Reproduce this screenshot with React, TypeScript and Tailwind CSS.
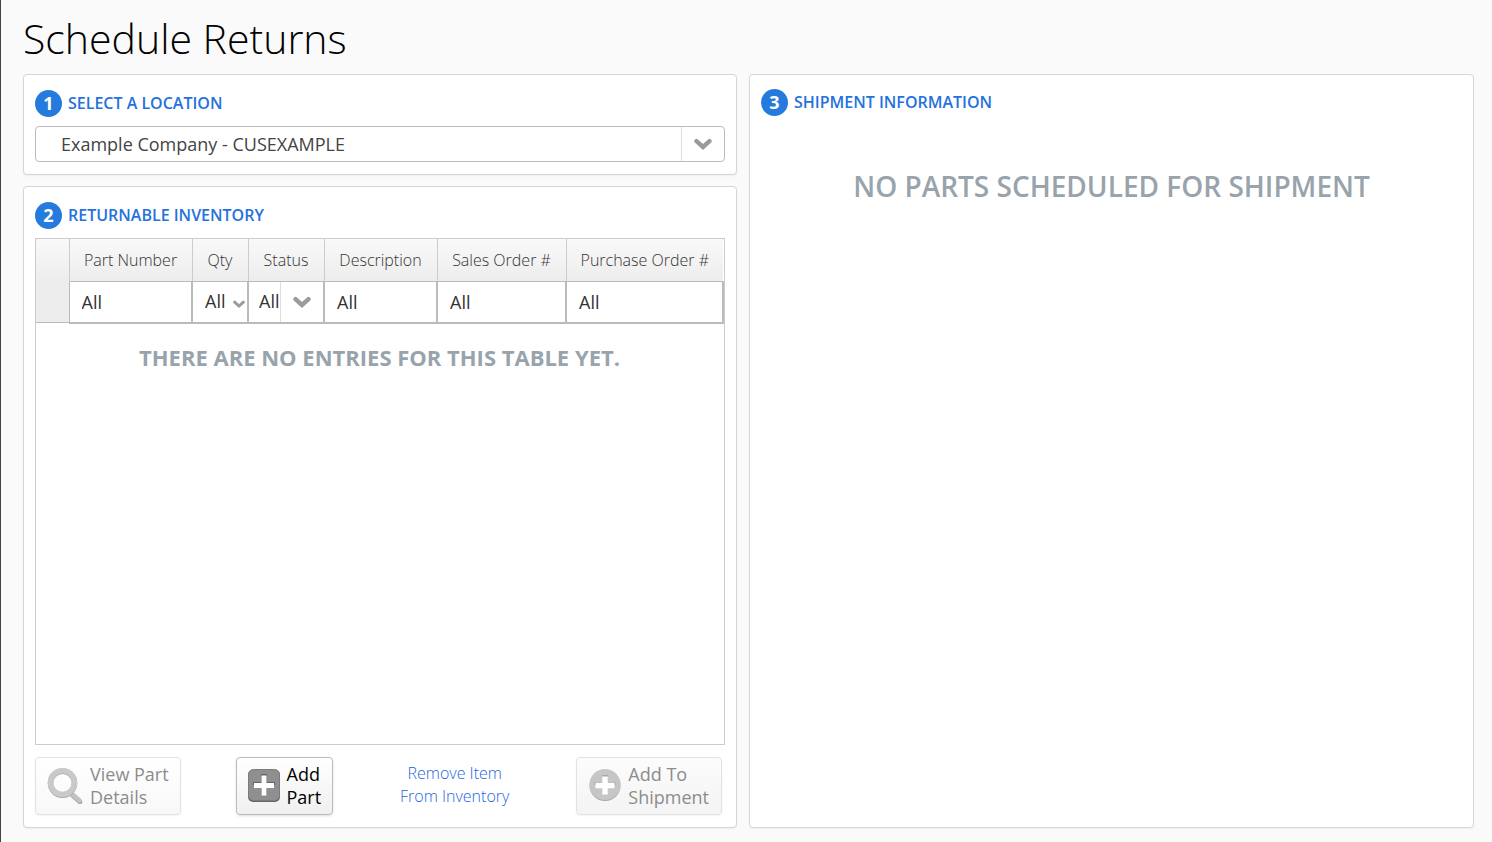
import React from 'react'
import clsx from 'clsx'

type Column = {
  id: string
  label: string
  width: string
  control: 'text' | 'compact-select' | 'select'
}

const columns: Column[] = [
  { id: 'part-number', label: 'Part Number', width: 'w-[123px]', control: 'text' },
  { id: 'qty', label: 'Qty', width: 'w-[56px]', control: 'compact-select' },
  { id: 'status', label: 'Status', width: 'w-[76px]', control: 'select' },
  { id: 'description', label: 'Description', width: 'w-[113px]', control: 'text' },
  { id: 'sales-order', label: 'Sales Order #', width: 'w-[129px]', control: 'text' },
  { id: 'purchase-order', label: 'Purchase Order #', width: 'w-[157px]', control: 'text' },
]

function Chevron({ className }: { className?: string }) {
  return (
    <svg viewBox="0 0 18 12" className={className} fill="none" aria-hidden="true">
      <path d="M2.5 3.2 9 9l6.5-5.8" stroke="#999b9d" strokeWidth="4.4" strokeLinecap="round" />
    </svg>
  )
}

function MagnifierIcon() {
  return (
    <svg viewBox="0 0 36 36" className="size-9 shrink-0" fill="none" aria-hidden="true">
      <path d="m25.5 27.5 7.5 6.5" stroke="#a5a5a5" strokeWidth="4.5" strokeLinecap="round" />
      <path d="m25 26 7.5 6.5" stroke="#c2c2c2" strokeWidth="4.5" strokeLinecap="round" />
      <circle cx="15.5" cy="15.2" r="12" stroke="#a5a5a5" strokeWidth="5.5" />
      <circle cx="15.5" cy="14.5" r="12" stroke="#c9c9c9" strokeWidth="5.5" />
    </svg>
  )
}

function PlusSquareIcon() {
  return (
    <svg viewBox="0 0 32 34" className="h-[34px] w-8 shrink-0" aria-hidden="true">
      <rect y="1" width="32" height="32" rx="5" fill="#666" />
      <rect x="0.5" y="0.5" width="31" height="31" rx="5" fill="#8f8f8f" stroke="#7c7c7c" />
      <path d="M13 5h6v8h8v3h-8v10h-6V16H5v-3h8z" fill="#666" />
      <path d="M13.5 6.5h5v7.5h7.5v5h-7.5v7.5h-5V19H6v-5h7.5z" fill="#fff" />
    </svg>
  )
}

function PlusCircleIcon() {
  return (
    <svg viewBox="0 0 32 34" className="h-[34px] w-8 shrink-0" aria-hidden="true">
      <circle cx="16" cy="16.5" r="15.5" fill="#a8a8a8" />
      <circle cx="16" cy="15.5" r="15.5" fill="#c6c6c6" />
      <path d="M13 6h6v7h7.5v3H19v8h-6v-8H5.5v-3H13z" fill="#a8a8a8" />
      <path d="M13.2 7.5h5.6v6.2h6.7v5.6h-6.7v6.2h-5.6v-6.2H6.5v-5.6h6.7z" fill="#fff" />
    </svg>
  )
}

function StepHeading({ step, id, children }: { step: number; id: string; children: React.ReactNode }) {
  return (
    <h2 id={id} className="flex items-center gap-[6px] text-[16px] leading-[27px] font-semibold text-[#2472dd]">
      <span className="flex size-[27px] shrink-0 items-center justify-center rounded-full bg-[#257bdd] text-[18px] font-bold text-white">
        {step}
      </span>
      {children}
    </h2>
  )
}

function Panel({ labelledBy, className, children }: { labelledBy: string; className?: string; children: React.ReactNode }) {
  return (
    <section
      aria-labelledby={labelledBy}
      className={clsx('flex flex-col rounded-[4px] border border-[#d6d6d6] bg-white px-[11px] pb-3 shadow-xs', className)}
    >
      {children}
    </section>
  )
}

function FilterControl({ column }: { column: Column }) {
  const label = `Filter by ${column.label}`

  if (column.control === 'text') {
    return (
      <input
        type="text"
        defaultValue="All"
        aria-label={label}
        className="block h-10 w-full min-w-0 px-3 text-[18px] text-[#333] outline-none"
      />
    )
  }

  const compact = column.control === 'compact-select'
  return (
    <div className="relative">
      <select
        aria-label={label}
        className={clsx(
          'block h-10 w-full appearance-none text-[18px] text-[#333] outline-none',
          compact ? 'pl-3' : 'pl-[10px]'
        )}
      >
        <option>All</option>
      </select>
      <span
        className={clsx(
          'pointer-events-none absolute inset-y-0 right-0 flex items-center justify-center',
          compact ? 'w-4 pt-1' : 'w-[43px] border-l border-[#ddd]'
        )}
      >
        <Chevron className={compact ? 'h-2 w-3' : 'h-3 w-[18px]'} />
      </span>
    </div>
  )
}

function InventoryTable() {
  return (
    <div className="mt-[9px] flex-1 border border-[#ccc]">
      <table className="w-full table-fixed border-collapse">
        <thead>
          <tr className="h-[42px] bg-linear-to-b from-[#f9f9f9] to-[#ededed]">
            <td className="w-[33px]" />
            {columns.map(column => (
              <th
                key={column.id}
                scope="col"
                className={clsx('border-l border-[#ccc] p-0 text-center text-[16px] font-light whitespace-nowrap text-[#333]', column.width)}
              >
                {column.label}
              </th>
            ))}
          </tr>
          <tr>
            <td className="border-b border-[#bbb] bg-[#ededed]" />
            {columns.map(column => (
              <td key={column.id} className="border border-r-2 border-b-2 border-[#bbb] bg-white p-0">
                <FilterControl column={column} />
              </td>
            ))}
          </tr>
        </thead>
        <tbody>
          <tr>
            <td colSpan={columns.length + 1} className="pt-[17px] text-center text-[22px] leading-8 font-bold text-[#98a3ac]">
              THERE ARE NO ENTRIES FOR THIS TABLE YET.
            </td>
          </tr>
        </tbody>
      </table>
    </div>
  )
}

const buttonBase =
  'flex h-[58px] items-center gap-[7px] rounded-[4px] border bg-linear-to-b text-left text-[18px] leading-[23px]'

export default function App() {
  return (
    <main className="flex min-h-screen flex-col border-l border-[#444] bg-[#fafafa] pr-[18px] pb-[14px] pl-[22px] font-['Open_Sans',sans-serif]">
      <h1 className="pt-[8px] text-[41px] leading-[60px] font-light text-black">Schedule Returns</h1>

      <div className="mt-[6px] grid flex-1 grid-cols-[714fr_725fr] gap-3">
        <div className="flex flex-col gap-[11px]">
          <Panel labelledBy="location-heading" className="pt-[15px]">
            <StepHeading step={1} id="location-heading">SELECT A LOCATION</StepHeading>
            <div className="relative mt-[9px]">
              <select
                aria-labelledby="location-heading"
                className="block h-9 w-full appearance-none rounded-[4px] border border-[#bbb] bg-white pl-[25px] text-[18px] text-[#444] outline-none"
              >
                <option>Example Company - CUSEXAMPLE</option>
              </select>
              <span className="pointer-events-none absolute inset-y-px right-px flex w-[43px] items-center justify-center border-l border-[#ddd]">
                <Chevron className="h-3 w-[18px]" />
              </span>
            </div>
          </Panel>

          <Panel labelledBy="inventory-heading" className="flex-1 pt-[15px]">
            <StepHeading step={2} id="inventory-heading">RETURNABLE INVENTORY</StepHeading>
            <InventoryTable />

            <div className="mt-3 flex items-center justify-between pr-[3px]">
              <button
                type="button"
                disabled
                className={clsx(buttonBase, 'border-[#e2e2e2] from-white to-[#f8f8f8] px-[11px] text-[#8c8c8c] shadow-xs')}
              >
                <MagnifierIcon />
                <span>View Part<br />Details</span>
              </button>
              <button
                type="button"
                className={clsx(buttonBase, 'border-[#bbb] from-white to-[#f0f0f0] px-[11px] text-black shadow-sm')}
              >
                <PlusSquareIcon />
                <span>Add<br />Part</span>
              </button>
              <a href="#remove" className="px-[12px] pb-[2px] text-center text-[16px] leading-[23px] font-light text-[#1d66e0]">
                Remove Item<br />From Inventory
              </a>
              <button
                type="button"
                disabled
                className={clsx(buttonBase, 'border-[#e2e2e2] from-[#fcfcfc] to-[#f4f4f4] px-3 text-[#8c8c8c] shadow-xs')}
              >
                <PlusCircleIcon />
                <span>Add To<br />Shipment</span>
              </button>
            </div>
          </Panel>
        </div>

        <Panel labelledBy="shipment-heading" className="pt-[14px]">
          <StepHeading step={3} id="shipment-heading">SHIPMENT INFORMATION</StepHeading>
          <p className="mt-[50px] text-center text-[28px] leading-10 font-semibold text-[#98a3ac]">
            NO PARTS SCHEDULED FOR SHIPMENT
          </p>
        </Panel>
      </div>
    </main>
  )
}
